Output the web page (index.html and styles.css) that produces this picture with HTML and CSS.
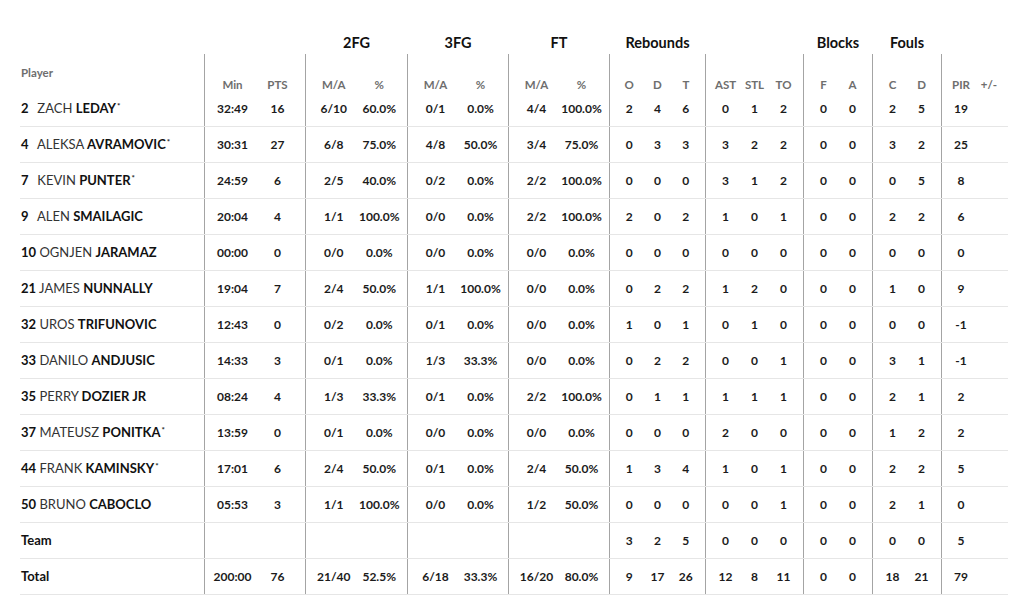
FILE: index.html
```html
<!DOCTYPE html>
<html>
<head>
<meta charset="utf-8">
<link rel="stylesheet" href="styles.css">
</head>
<body>
<div class="box">
  <div class="row titles">
    <div class="player"></div>
    <div class="grp g-time"></div>
    <div class="grp g-2fg"><span>2FG</span></div>
    <div class="grp g-3fg"><span>3FG</span></div>
    <div class="grp g-ft"><span>FT</span></div>
    <div class="grp g-reb"><span>Rebounds</span></div>
    <div class="grp g-misc"></div>
    <div class="grp g-blk"><span>Blocks</span></div>
    <div class="grp g-foul"><span>Fouls</span></div>
    <div class="grp g-pir"></div>
  </div>
  <div class="row subhead">
    <div class="player">Player</div>
    <div class="grp g-time"><span>Min</span><span>PTS</span></div>
    <div class="grp g-2fg"><span>M/A</span><span>%</span></div>
    <div class="grp g-3fg"><span>M/A</span><span>%</span></div>
    <div class="grp g-ft"><span>M/A</span><span>%</span></div>
    <div class="grp g-reb"><span>O</span><span>D</span><span>T</span></div>
    <div class="grp g-misc"><span>AST</span><span>STL</span><span>TO</span></div>
    <div class="grp g-blk"><span>F</span><span>A</span></div>
    <div class="grp g-foul"><span>C</span><span>D</span></div>
    <div class="grp g-pir"><span>PIR</span><span>+/-</span></div>
  </div>

  <div class="row">
    <div class="player"><span class="num">2</span> <span class="first">ZACH</span> <b>LEDAY</b><span class="st">*</span></div>
    <div class="grp g-time"><span>32:49</span><span>16</span></div>
    <div class="grp g-2fg"><span>6/10</span><span>60.0%</span></div>
    <div class="grp g-3fg"><span>0/1</span><span>0.0%</span></div>
    <div class="grp g-ft"><span>4/4</span><span>100.0%</span></div>
    <div class="grp g-reb"><span>2</span><span>4</span><span>6</span></div>
    <div class="grp g-misc"><span>0</span><span>1</span><span>2</span></div>
    <div class="grp g-blk"><span>0</span><span>0</span></div>
    <div class="grp g-foul"><span>2</span><span>5</span></div>
    <div class="grp g-pir"><span>19</span><span></span></div>
  </div>
  <div class="row">
    <div class="player"><span class="num">4</span> <span class="first">ALEKSA</span> <b>AVRAMOVIC</b><span class="st">*</span></div>
    <div class="grp g-time"><span>30:31</span><span>27</span></div>
    <div class="grp g-2fg"><span>6/8</span><span>75.0%</span></div>
    <div class="grp g-3fg"><span>4/8</span><span>50.0%</span></div>
    <div class="grp g-ft"><span>3/4</span><span>75.0%</span></div>
    <div class="grp g-reb"><span>0</span><span>3</span><span>3</span></div>
    <div class="grp g-misc"><span>3</span><span>2</span><span>2</span></div>
    <div class="grp g-blk"><span>0</span><span>0</span></div>
    <div class="grp g-foul"><span>3</span><span>2</span></div>
    <div class="grp g-pir"><span>25</span><span></span></div>
  </div>
  <div class="row">
    <div class="player"><span class="num">7</span> <span class="first">KEVIN</span> <b>PUNTER</b><span class="st">*</span></div>
    <div class="grp g-time"><span>24:59</span><span>6</span></div>
    <div class="grp g-2fg"><span>2/5</span><span>40.0%</span></div>
    <div class="grp g-3fg"><span>0/2</span><span>0.0%</span></div>
    <div class="grp g-ft"><span>2/2</span><span>100.0%</span></div>
    <div class="grp g-reb"><span>0</span><span>0</span><span>0</span></div>
    <div class="grp g-misc"><span>3</span><span>1</span><span>2</span></div>
    <div class="grp g-blk"><span>0</span><span>0</span></div>
    <div class="grp g-foul"><span>0</span><span>5</span></div>
    <div class="grp g-pir"><span>8</span><span></span></div>
  </div>
  <div class="row">
    <div class="player"><span class="num">9</span> <span class="first">ALEN</span> <b>SMAILAGIC</b></div>
    <div class="grp g-time"><span>20:04</span><span>4</span></div>
    <div class="grp g-2fg"><span>1/1</span><span>100.0%</span></div>
    <div class="grp g-3fg"><span>0/0</span><span>0.0%</span></div>
    <div class="grp g-ft"><span>2/2</span><span>100.0%</span></div>
    <div class="grp g-reb"><span>2</span><span>0</span><span>2</span></div>
    <div class="grp g-misc"><span>1</span><span>0</span><span>1</span></div>
    <div class="grp g-blk"><span>0</span><span>0</span></div>
    <div class="grp g-foul"><span>2</span><span>2</span></div>
    <div class="grp g-pir"><span>6</span><span></span></div>
  </div>
  <div class="row">
    <div class="player"><span class="num">10</span> <span class="first">OGNJEN</span> <b>JARAMAZ</b></div>
    <div class="grp g-time"><span>00:00</span><span>0</span></div>
    <div class="grp g-2fg"><span>0/0</span><span>0.0%</span></div>
    <div class="grp g-3fg"><span>0/0</span><span>0.0%</span></div>
    <div class="grp g-ft"><span>0/0</span><span>0.0%</span></div>
    <div class="grp g-reb"><span>0</span><span>0</span><span>0</span></div>
    <div class="grp g-misc"><span>0</span><span>0</span><span>0</span></div>
    <div class="grp g-blk"><span>0</span><span>0</span></div>
    <div class="grp g-foul"><span>0</span><span>0</span></div>
    <div class="grp g-pir"><span>0</span><span></span></div>
  </div>
  <div class="row">
    <div class="player"><span class="num">21</span> <span class="first">JAMES</span> <b>NUNNALLY</b></div>
    <div class="grp g-time"><span>19:04</span><span>7</span></div>
    <div class="grp g-2fg"><span>2/4</span><span>50.0%</span></div>
    <div class="grp g-3fg"><span>1/1</span><span>100.0%</span></div>
    <div class="grp g-ft"><span>0/0</span><span>0.0%</span></div>
    <div class="grp g-reb"><span>0</span><span>2</span><span>2</span></div>
    <div class="grp g-misc"><span>1</span><span>2</span><span>0</span></div>
    <div class="grp g-blk"><span>0</span><span>0</span></div>
    <div class="grp g-foul"><span>1</span><span>0</span></div>
    <div class="grp g-pir"><span>9</span><span></span></div>
  </div>
  <div class="row">
    <div class="player"><span class="num">32</span> <span class="first">UROS</span> <b>TRIFUNOVIC</b></div>
    <div class="grp g-time"><span>12:43</span><span>0</span></div>
    <div class="grp g-2fg"><span>0/2</span><span>0.0%</span></div>
    <div class="grp g-3fg"><span>0/1</span><span>0.0%</span></div>
    <div class="grp g-ft"><span>0/0</span><span>0.0%</span></div>
    <div class="grp g-reb"><span>1</span><span>0</span><span>1</span></div>
    <div class="grp g-misc"><span>0</span><span>1</span><span>0</span></div>
    <div class="grp g-blk"><span>0</span><span>0</span></div>
    <div class="grp g-foul"><span>0</span><span>0</span></div>
    <div class="grp g-pir"><span>-1</span><span></span></div>
  </div>
  <div class="row">
    <div class="player"><span class="num">33</span> <span class="first">DANILO</span> <b>ANDJUSIC</b></div>
    <div class="grp g-time"><span>14:33</span><span>3</span></div>
    <div class="grp g-2fg"><span>0/1</span><span>0.0%</span></div>
    <div class="grp g-3fg"><span>1/3</span><span>33.3%</span></div>
    <div class="grp g-ft"><span>0/0</span><span>0.0%</span></div>
    <div class="grp g-reb"><span>0</span><span>2</span><span>2</span></div>
    <div class="grp g-misc"><span>0</span><span>0</span><span>1</span></div>
    <div class="grp g-blk"><span>0</span><span>0</span></div>
    <div class="grp g-foul"><span>3</span><span>1</span></div>
    <div class="grp g-pir"><span>-1</span><span></span></div>
  </div>
  <div class="row">
    <div class="player"><span class="num">35</span> <span class="first">PERRY</span> <b>DOZIER JR</b></div>
    <div class="grp g-time"><span>08:24</span><span>4</span></div>
    <div class="grp g-2fg"><span>1/3</span><span>33.3%</span></div>
    <div class="grp g-3fg"><span>0/1</span><span>0.0%</span></div>
    <div class="grp g-ft"><span>2/2</span><span>100.0%</span></div>
    <div class="grp g-reb"><span>0</span><span>1</span><span>1</span></div>
    <div class="grp g-misc"><span>1</span><span>1</span><span>1</span></div>
    <div class="grp g-blk"><span>0</span><span>0</span></div>
    <div class="grp g-foul"><span>2</span><span>1</span></div>
    <div class="grp g-pir"><span>2</span><span></span></div>
  </div>
  <div class="row">
    <div class="player"><span class="num">37</span> <span class="first">MATEUSZ</span> <b>PONITKA</b><span class="st">*</span></div>
    <div class="grp g-time"><span>13:59</span><span>0</span></div>
    <div class="grp g-2fg"><span>0/1</span><span>0.0%</span></div>
    <div class="grp g-3fg"><span>0/0</span><span>0.0%</span></div>
    <div class="grp g-ft"><span>0/0</span><span>0.0%</span></div>
    <div class="grp g-reb"><span>0</span><span>0</span><span>0</span></div>
    <div class="grp g-misc"><span>2</span><span>0</span><span>0</span></div>
    <div class="grp g-blk"><span>0</span><span>0</span></div>
    <div class="grp g-foul"><span>1</span><span>2</span></div>
    <div class="grp g-pir"><span>2</span><span></span></div>
  </div>
  <div class="row">
    <div class="player"><span class="num">44</span> <span class="first">FRANK</span> <b>KAMINSKY</b><span class="st">*</span></div>
    <div class="grp g-time"><span>17:01</span><span>6</span></div>
    <div class="grp g-2fg"><span>2/4</span><span>50.0%</span></div>
    <div class="grp g-3fg"><span>0/1</span><span>0.0%</span></div>
    <div class="grp g-ft"><span>2/4</span><span>50.0%</span></div>
    <div class="grp g-reb"><span>1</span><span>3</span><span>4</span></div>
    <div class="grp g-misc"><span>1</span><span>0</span><span>1</span></div>
    <div class="grp g-blk"><span>0</span><span>0</span></div>
    <div class="grp g-foul"><span>2</span><span>2</span></div>
    <div class="grp g-pir"><span>5</span><span></span></div>
  </div>
  <div class="row">
    <div class="player"><span class="num">50</span> <span class="first">BRUNO</span> <b>CABOCLO</b></div>
    <div class="grp g-time"><span>05:53</span><span>3</span></div>
    <div class="grp g-2fg"><span>1/1</span><span>100.0%</span></div>
    <div class="grp g-3fg"><span>0/0</span><span>0.0%</span></div>
    <div class="grp g-ft"><span>1/2</span><span>50.0%</span></div>
    <div class="grp g-reb"><span>0</span><span>0</span><span>0</span></div>
    <div class="grp g-misc"><span>0</span><span>0</span><span>1</span></div>
    <div class="grp g-blk"><span>0</span><span>0</span></div>
    <div class="grp g-foul"><span>2</span><span>1</span></div>
    <div class="grp g-pir"><span>0</span><span></span></div>
  </div>
  <div class="row">
    <div class="player"><b>Team</b></div>
    <div class="grp g-time"></div>
    <div class="grp g-2fg"></div>
    <div class="grp g-3fg"></div>
    <div class="grp g-ft"></div>
    <div class="grp g-reb"><span>3</span><span>2</span><span>5</span></div>
    <div class="grp g-misc"><span>0</span><span>0</span><span>0</span></div>
    <div class="grp g-blk"><span>0</span><span>0</span></div>
    <div class="grp g-foul"><span>0</span><span>0</span></div>
    <div class="grp g-pir"><span>5</span><span></span></div>
  </div>
  <div class="row">
    <div class="player"><b>Total</b></div>
    <div class="grp g-time"><span>200:00</span><span>76</span></div>
    <div class="grp g-2fg"><span>21/40</span><span>52.5%</span></div>
    <div class="grp g-3fg"><span>6/18</span><span>33.3%</span></div>
    <div class="grp g-ft"><span>16/20</span><span>80.0%</span></div>
    <div class="grp g-reb"><span>9</span><span>17</span><span>26</span></div>
    <div class="grp g-misc"><span>12</span><span>8</span><span>11</span></div>
    <div class="grp g-blk"><span>0</span><span>0</span></div>
    <div class="grp g-foul"><span>18</span><span>21</span></div>
    <div class="grp g-pir"><span>79</span><span></span></div>
  </div>
</div>
</body>
</html>
```

FILE: styles.css
```css
html, body {
  margin: 0;
  padding: 0;
  background: #ffffff;
}

body {
  font-family: Lato, "Noto Sans", sans-serif;
  color: #1b1b1b;
}

.box {
  margin-left: 20px;
  padding-top: 30px;
  width: 988px;
}

.row {
  display: flex;
  height: 36px;
  box-sizing: border-box;
  border-bottom: 1px solid #e6e6e6;
}

.titles {
  height: 24px;
  border-bottom: 0;
}

.subhead {
  height: 37px;
  border-bottom: 0;
}

.player {
  flex: none;
  width: 184px;
  box-sizing: border-box;
  padding-left: 1px;
  font-size: 13px;
  line-height: 35px;
  white-space: nowrap;
  color: #1b1b1b;
}

.player b {
  font-weight: 700;
  color: #111111;
}

.subhead .player {
  line-height: 37px;
  font-size: 11.5px;
  font-weight: 700;
  color: #6e6e6e;
}

.num {
  display: inline-block;
  min-width: 13px;
  font-weight: 700;
  color: #111111;
}

.first {
  font-weight: 400;
  color: #333333;
}

.st {
  font-size: 8px;
  font-weight: 700;
  vertical-align: 4px;
  line-height: 0;
  margin-left: 1px;
}

.grp {
  flex: none;
  display: grid;
  grid-auto-flow: column;
  grid-auto-columns: 1fr;
  align-items: center;
  text-align: center;
  padding: 0 5px;
  box-sizing: border-box;
  border-left: 1px solid #a4a4a4;
  font-size: 12px;
  font-weight: 700;
  color: #1b1b1b;
  white-space: nowrap;
}

.titles .grp {
  border-left-color: transparent;
  font-size: 14.5px;
  color: #111111;
}

.subhead .grp {
  align-items: end;
  font-size: 11.5px;
  line-height: 10px;
  padding-bottom: 1px;
  color: #6e6e6e;
}

.g-time { width: 101px; }
.g-2fg { width: 102px; }
.g-3fg { width: 101px; }
.g-ft { width: 101px; }
.g-reb { width: 96px; }
.g-misc { width: 98px; }
.g-blk { width: 69px; }
.g-foul { width: 69px; }
.g-pir { width: 67px; }
```
